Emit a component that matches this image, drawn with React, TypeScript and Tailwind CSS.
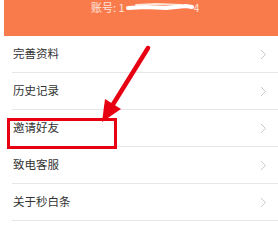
import React from "react";

const items = ["完善资料", "历史记录", "邀请好友", "致电客服", "关于秒白条"];

function Chevron() {
  return (
    <svg width="7" height="11" viewBox="0 0 7 11" className="mr-[11px]">
      <path d="M1 1 L5.5 5.5 L1 10" fill="none" stroke="#c9c9c9" strokeWidth="1" />
    </svg>
  );
}

export default function App() {
  return (
    <div
      className="relative w-[278px] h-[228px] overflow-hidden bg-white"
      style={{ fontFamily: '"Noto Sans CJK SC", "Noto Sans", sans-serif' }}
    >
      <div className="ml-[4px] h-[36px] bg-[#f97b4b] flex items-start pl-[87px] pt-0">
        <span className="text-[11px] leading-[15px] text-white/80">账号: 1</span>
        <svg width="72" height="14" viewBox="0 0 72 14" className="ml-[1px]">
          <path d="M2 8 L20 7 L40 8 L60 6 L66 7" stroke="#ffffff" strokeWidth="4" fill="none" strokeLinecap="round" />
          <path d="M10 5 L30 4 L55 5" stroke="#ffffff" strokeWidth="2" fill="none" strokeLinecap="round" opacity="0.8" />
        </svg>
        <span className="text-[10px] leading-[15px] text-white/80 -ml-[4px]">4</span>
      </div>
      <div className="ml-[12px]">
        {items.map((t) => (
          <div
            key={t}
            className="h-[37px] border-b border-[#e6e6e6] flex items-center justify-between pl-[1px]"
          >
            <span className="text-[11.5px] text-[#333333]">{t}</span>
            <Chevron />
          </div>
        ))}
      </div>
      <div className="absolute left-[7px] top-[118px] w-[110px] h-[31px] border-[3px] border-[#e60012]" />
      <svg className="absolute left-0 top-0" width="278" height="228" viewBox="0 0 278 228">
        <line x1="148" y1="48" x2="112" y2="106" stroke="#e60012" strokeWidth="4.5" strokeLinecap="round" />
        <polygon points="102,122 121,109 105,99" fill="#e60012" />
      </svg>
    </div>
  );
}
